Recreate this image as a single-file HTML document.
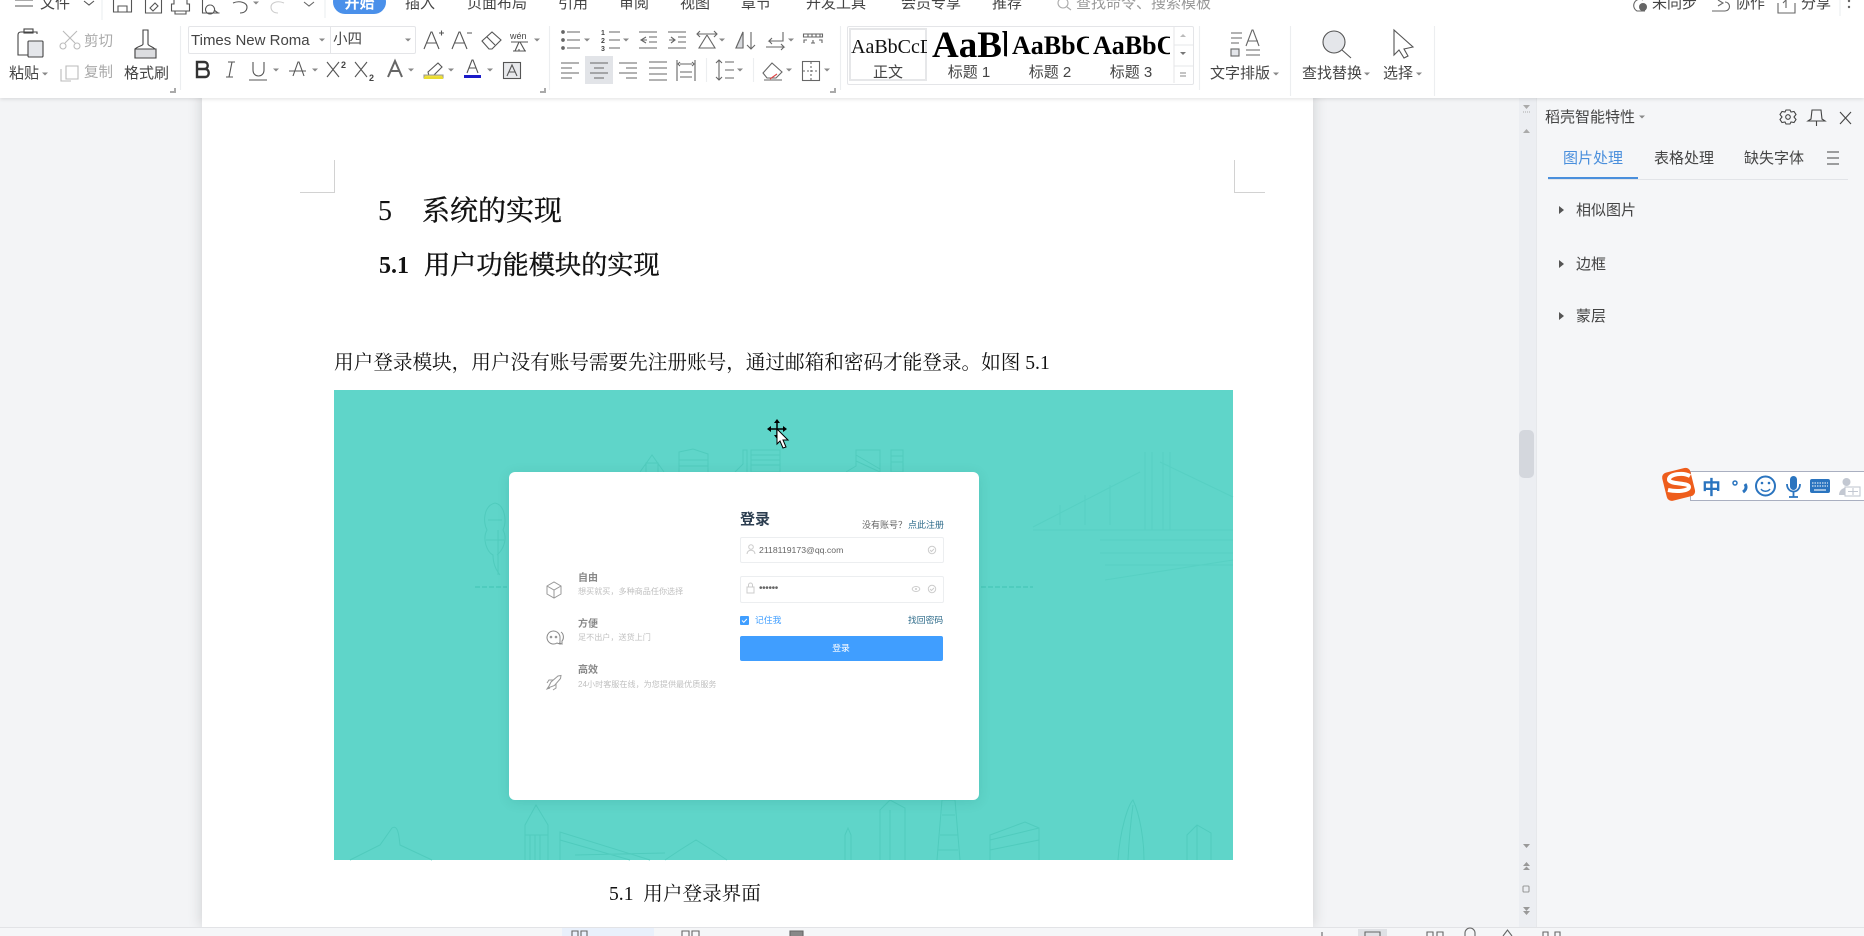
<!DOCTYPE html>
<html lang="zh"><head><meta charset="utf-8"><title>WPS</title>
<style>
html,body{margin:0;padding:0;width:1864px;height:936px;overflow:hidden;background:#f3f4f6}
body{position:relative;font-family:"Liberation Sans","Noto Sans CJK SC",sans-serif;color:#333}
.b{position:absolute}
.t{position:absolute;white-space:nowrap;line-height:1;font-size:15px;color:#444}
.s{font-family:"Liberation Serif","Noto Serif CJK SC",serif;color:#111}
.c{transform:translateX(-50%)}
.l{filter:blur(.25px)}
svg{position:absolute;left:0;top:0;overflow:visible}
</style></head><body>

<!-- document -->
<div class="b" style="left:202px;top:90px;width:1111px;height:837px;background:#fff;box-shadow:0 0 14px rgba(0,0,0,.16)"></div>
<div class="b" style="left:334px;top:390px;width:899px;height:470px;background:#5fd5c9"></div>

<svg width="1864" height="936" fill="none" stroke="#50cbbd" stroke-width="1">
<path d="M640 472l12-17 12 17M646 472v-9h12v9M679 472v-20l14-3 15 5v18M679 460h29M679 466h29M735 472l8-8v-14h4v22M751 450h29v22h-29zM751 455h29M751 460h29M751 465h29M846 472l10-6v-16h24v22M856 455l24 14M856 461l24 11M891 450h12v22h-12zM891 456h12M891 462h12"/>
<g stroke="#57d0c3"><path d="M1033 527l107-55M1160 462l73 35M1145 452v78M1170 452v78M1152 452v78M1163 452v78M1033 530h200M1100 540h133M1100 553h133M1105 565h128M1105 580l128-20M1060 525v-20M1085 525v-30M1110 525v-40"/></g>
<path d="M495 503c-12 3-12 20-8 27-5 9 0 22 6 25 0 8 3 15 7 20M495 503c10 2 12 18 8 27 5 9 0 20-6 25M498 530v45M488 520h14M486 540h18"/>
<path d="M475 587h32M981 587h52" stroke="#3fc3b3" stroke-dasharray="5 2"/>
<path d="M350 860l30-15 12-17c6-4 7 8 8 17l32 15M525 860v-35l11-20 12 20v35M525 835h23M530 835v25M535 835v25M540 835v25M560 860v-28l90 28M560 840l70 20M575 855l90-2M665 860l15-10 16-10 16 10 15 10M845 860v-25l3-7 3 7v25M880 860v-50l10-10 15 8v52M890 810v50M937 860l5-60h13l5 60M942 815h13M940 835h18M938 850h20M990 860v-25l35-13 14 6v32M990 840l49-12M990 850l49-10M1118 860c2-30 10-55 15-60 7 15 11 40 11 60M1128 860c1-22 3-40 5-55M1187 860v-25l10-10 14 8v27M1197 825v35"/>
</svg>

<div class="b" style="left:509px;top:472px;width:470px;height:328px;background:#fff;border-radius:6px;box-shadow:0 2px 12px rgba(0,80,70,.12)"></div>
<div class="t l" style="left:740px;top:512px;font-size:15px;font-weight:700;color:#2c3e50">登录</div>
<div class="t l" style="left:862px;top:520.500px;font-size:9px;color:#666">没有账号？</div>
<div class="t l" style="left:908px;top:520.500px;font-size:9px;color:#2d6b8a">点此注册</div>
<div class="b" style="left:740px;top:537px;width:202px;height:24px;border:1px solid #eceef0;border-radius:2px"></div>
<div class="t l" style="left:759px;top:545.500px;font-size:8.700px;color:#666">2118119173@qq.com</div>
<div class="b" style="left:740px;top:576px;width:202px;height:25px;border:1px solid #eceef0;border-radius:2px"></div>
<div class="t l" style="left:759px;top:584px;font-size:10px;color:#666;letter-spacing:-.35px">••••••</div>
<div class="b" style="left:740px;top:616px;width:9px;height:9px;background:#409eff;border-radius:1px"></div>
<div class="t l" style="left:755px;top:616px;font-size:8.800px;color:#409eff">记住我</div>
<div class="t l" style="left:908px;top:616px;font-size:8.800px;color:#2d6b8a">找回密码</div>
<div class="b" style="left:740px;top:636px;width:203px;height:25px;background:#409eff;border-radius:2px"></div>
<div class="t c l" style="left:841px;top:644px;font-size:8.800px;color:#fff">登录</div>
<div class="t l" style="left:578px;top:574px;font-size:10px;color:#888;font-weight:700">自由</div>
<div class="t l" style="left:578px;top:588px;font-size:8.100px;color:#c0c0c0">想买就买，多种商品任你选择</div>
<div class="t l" style="left:578px;top:620px;font-size:10px;color:#888;font-weight:700">方便</div>
<div class="t l" style="left:578px;top:634px;font-size:8.100px;color:#c0c0c0">足不出户，送货上门</div>
<div class="t l" style="left:578px;top:666px;font-size:10px;color:#888;font-weight:700">高效</div>
<div class="t l" style="left:578px;top:681px;font-size:8.100px;color:#c0c0c0">24小时客服在线，为您提供最优质服务</div>

<svg width="1864" height="936" fill="none" stroke="#999" stroke-width="1">
<path d="M547 586l7-4 7 4v8l-7 4-7-4zM547 586l7 4 7-4M554 590v8"/>
<path d="M560 637a6.500 6.500 0 1 0-3 6l3 1zM561 632c3 2 3 7 1 9v3l-3-1" stroke="#888"/><circle cx="551" cy="637" r=".8" fill="#888"/><circle cx="556" cy="637" r=".8" fill="#888"/>
<path d="M548 688l3-6 7-6 3-.5-.5 3-6 7zM553 680h-4l-2 3M556 684v4l-3 2M549 686l-2 3 3-1"/>
<circle cx="751" cy="547" r="2.300" stroke="#ccc"/><path d="M747 554c0-5 8-5 8 0" stroke="#ccc"/>
<circle cx="932" cy="550" r="3.700" stroke="#ccc"/><path d="M930 550l1.500 1.500 2.500-2.500" stroke="#ccc"/>
<rect x="747" y="587" width="7" height="6" stroke="#ccc"/><path d="M748.500 587v-2a2 2 0 0 1 4 0v2" stroke="#ccc"/>
<ellipse cx="916" cy="589" rx="3.800" ry="2.500" stroke="#ccc"/><circle cx="916" cy="589" r="1" fill="#ccc" stroke="none"/>
<circle cx="932" cy="589" r="3.700" stroke="#ccc"/><path d="M930 589l1.500 1.500 2.500-2.500" stroke="#ccc"/>
<path d="M742 620.500l1.800 1.800 3-3.300" stroke="#fff"/>
<!-- crop marks -->
<path d="M300 192.500h34.500V160M1265 192.500h-30.500V160" stroke="#d2d2d2"/>
<!-- mouse cursor -->
<path d="M777 422v14M770 429h14" stroke="#000" stroke-width="1.500"/><path d="M777 419l-3 4h6zM777 439l-3-4h6zM767 429l4-3v6zM787 429l-4-3v6z" fill="#000" stroke="none"/>
<path d="M777 429l0 15 3-3 3 7 3-1-3-7h5z" fill="#fff" stroke="#000"/>
</svg>

<div class="t s" style="left:378px;top:198px;font-size:28px">5</div>
<div class="t s" style="left:422px;top:198px;font-size:28px;-webkit-text-stroke:.4px #111">系统的实现</div>
<div class="t s" style="left:379px;top:254px;font-size:24px;font-weight:700">5.1</div>
<div class="t s" style="left:424px;top:253px;font-size:26.200px;-webkit-text-stroke:.4px #111">用户功能模块的实现</div>
<div class="t s" style="left:334px;top:354px;font-size:19.630px">用户登录模块，用户没有账号需要先注册账号，通过邮箱和密码才能登录。如图 5.1</div>
<div class="t s" style="left:609px;top:885px;font-size:19.600px">5.1&nbsp; 用户登录界面</div>

<!-- scrollbar + panel -->
<div class="b" style="left:1519px;top:98px;width:17px;height:829px;background:#eceef2"></div>
<div class="b" style="left:1519px;top:430px;width:15px;height:48px;background:#d4d7dd;border-radius:5px"></div>
<div class="b" style="left:1536px;top:98px;width:328px;height:829px;background:#f5f6f8;border-left:1px solid #e6e8eb;box-sizing:border-box"></div>
<div class="t" style="left:1545px;top:110px">稻壳智能特性</div>
<div class="t" style="left:1563px;top:151px;color:#4a8fdc">图片处理</div>
<div class="t" style="left:1654px;top:151px">表格处理</div>
<div class="t" style="left:1744px;top:151px">缺失字体</div>
<div class="b" style="left:1548px;top:179px;width:300px;height:1px;background:#e2e4e8"></div>
<div class="b" style="left:1548px;top:177px;width:90px;height:2px;background:#4a8fdc"></div>
<div class="t" style="left:1576px;top:203px">相似图片</div>
<div class="t" style="left:1576px;top:257px">边框</div>
<div class="t" style="left:1576px;top:309px">蒙层</div>

<!-- status bar -->
<div class="b" style="left:0;top:927px;width:1864px;height:9px;background:#f5f6f8;border-top:1px solid #e2e3e6;box-sizing:border-box"></div>
<div class="b" style="left:562px;top:928px;width:92px;height:8px;background:#e9f0fb"></div>
<div class="b" style="left:1358px;top:929px;width:29px;height:7px;background:#dfe1e5"></div>

<!-- ribbon -->
<div class="b" style="left:0;top:0;width:1864px;height:98px;background:#fff;box-shadow:0 1px 4px rgba(0,0,0,.12)"></div>
<div class="b" style="left:333px;top:-10px;width:53px;height:24px;background:#4a90ea;border-radius:12px"></div>

<div class="t" style="left:40px;top:-4px">文件</div>
<div class="t c" style="left:359.500px;top:-4px;color:#fff;font-weight:700">开始</div>
<div class="t c" style="left:420px;top:-4px">插入</div>
<div class="t c" style="left:497px;top:-4px">页面布局</div>
<div class="t c" style="left:573px;top:-4px">引用</div>
<div class="t c" style="left:634px;top:-4px">审阅</div>
<div class="t c" style="left:695px;top:-4px">视图</div>
<div class="t c" style="left:756px;top:-4px">章节</div>
<div class="t c" style="left:836px;top:-4px">开发工具</div>
<div class="t c" style="left:931px;top:-4px">会员专享</div>
<div class="t c" style="left:1007px;top:-4px">推荐</div>
<div class="t" style="left:1076px;top:-4px;color:#999">查找命令、搜索模板</div>
<div class="t" style="left:1652px;top:-4px">未同步</div>
<div class="t" style="left:1735px;top:-4px">协作</div>
<div class="t" style="left:1801px;top:-4px">分享</div>

<div class="t" style="left:9px;top:66px">粘贴</div>
<div class="t" style="left:84px;top:35px;color:#aaa;font-size:14.500px">剪切</div>
<div class="t" style="left:84px;top:66px;color:#aaa;font-size:14.500px">复制</div>
<div class="t" style="left:124px;top:66px">格式刷</div>

<div class="b" style="left:188px;top:26px;width:226px;height:26px;border:1px solid #e4e5e8;border-radius:2px"></div>
<div class="b" style="left:330px;top:26px;width:1px;height:28px;background:#e4e5e8"></div>
<div class="t" style="left:191px;top:33px;font-size:15px">Times New Roma</div>
<div class="t" style="left:333px;top:33px;font-size:14.500px">小四</div>

<div class="b" style="left:585px;top:56px;width:28px;height:28px;background:#e2e4e8"></div>

<div class="b" style="left:847px;top:26px;width:345px;height:57px;border:1px solid #e4e5e8;border-radius:2px;overflow:hidden"></div>
<div class="b" style="left:849px;top:28px;width:78px;height:53px;border:2px solid #e6e7e9;box-sizing:border-box"></div>
<div class="b s" style="left:851px;top:35px;width:76px;height:24px;overflow:hidden;font-size:20px;line-height:24px;white-space:nowrap">AaBbCcD</div>
<div class="b s" style="left:932px;top:27px;width:75px;height:38px;overflow:hidden;font-size:37px;line-height:38px;font-weight:700;white-space:nowrap;color:#000">AaBbC</div>
<div class="b s" style="left:1012px;top:31px;width:77px;height:30px;overflow:hidden;font-size:26px;line-height:30px;font-weight:700;white-space:nowrap;color:#000">AaBbCc</div>
<div class="b s" style="left:1093px;top:31px;width:77px;height:30px;overflow:hidden;font-size:26px;line-height:30px;font-weight:700;white-space:nowrap;color:#000">AaBbCc</div>
<div class="t c" style="left:888px;top:65px">正文</div>
<div class="t c" style="left:969px;top:65px">标题 1</div>
<div class="t c" style="left:1050px;top:65px">标题 2</div>
<div class="t c" style="left:1131px;top:65px">标题 3</div>
<div class="t" style="left:1210px;top:66px">文字排版</div>
<div class="t" style="left:1302px;top:66px">查找替换</div>
<div class="t" style="left:1383px;top:66px">选择</div>

<svg width="1864" height="936" fill="none" stroke="#555" stroke-width="1.100">
<defs><path id="a" d="M-3-1.500h6l-3 3z" fill="#888" stroke="none"/></defs>
<!-- separators -->
<path stroke="#eceef0" d="M102 0v20M325 0v18M180.500 26v64M549.500 26v64M840.500 26v64M1199.500 26v64M1290.500 26v70M1434.500 26v70M706.500 58v24M753.500 58v24M1840 0v16"/>
<path stroke="#aaa" stroke-width="2" d="M175 88v4h-5M545 88v4h-5M835 88v4h-5"/>
<!-- top toolbar -->
<path d="M15 0h18M15 6h18M84 1l5 4 5-4"/>
<path d="M113.500 0v12h18V0M118 12V6h9v6"/>
<path d="M145.500 0v13h16V0M150 8l5-5 3 3-5 5z"/>
<path d="M174 0v4h-2.500v7h18V4H187V0M175 11v3h11v-3"/>
<path d="M202.500 0v13h17M210 5a4.500 4.500 0 1 0 .1 0M214 10l4 3"/>
<path d="M233 3c7-3 14 0 14 4s-3 6-7 6"/><use href="#a" x="256" y="3"/>
<path stroke="#ccc" d="M284 3c-7-3-13 0-13 4s3 6 7 6"/>
<path d="M304 2l5 4 5-4" stroke="#666"/>
<circle cx="1063" cy="3" r="5" stroke="#aaa"/><path stroke="#aaa" d="M1067 7l4 3"/>
<path d="M1643 0a6 6 0 1 0-6 11h8" stroke="#666"/><circle cx="1643" cy="7" r="4" fill="#666" stroke="none"/>
<path d="M1712 11h13a4 4 0 0 0 0-9M1718 0l5 3-5 3" stroke="#666"/>
<path d="M1778 3v10h17V3M1786 8V0l-3 3" stroke="#666"/>
<circle cx="1849" cy="1" r="1.200" fill="#666" stroke="none"/><circle cx="1849" cy="7" r="1.200" fill="#666" stroke="none"/>
<!-- paste -->
<path d="M37 34V32H21c-2 0-3 1-3 3v20h10" stroke="#444"/><rect x="24" y="29" width="9" height="4" stroke="#444"/><rect x="28" y="41" width="15" height="16" rx="1" fill="#e4e6ea" stroke="#444"/><use href="#a" x="45" y="74"/>
<!-- cut -->
<g stroke="#bbb"><path d="M63 31l12 12M77 31L65 43"/><circle cx="63" cy="46" r="3"/><circle cx="77" cy="46" r="3"/><path d="M66 66h12v13H66zM61 69v12h10"/></g>
<!-- brush -->
<path d="M143 30h5v14c0 2 4 2 7 5v9h-20v-9c3-3 8-3 8-5z" stroke="#444"/><path d="M135 49h21v9h-21z" fill="#dcdde0" stroke="#444"/>
<use href="#a" x="322" y="40"/><use href="#a" x="408" y="40"/>
<!-- A+ A- eraser wen -->
<path d="M424 49l7-17h1l7 17M427 43h10M439 33h5M441.500 30.500v5"/>
<path d="M452 49l7-17h1l7 17M455 43h10M467 33h5"/>
<path d="M482 41l10-9 9 8-9 9h-3zM487 37l8 8" />
<path d="M511 42h17M519 42l-4 9h10l-5-9M513 51h13M519 51v-2"/>
<text x="510" y="39" font-size="9" fill="#444" stroke="none" font-family="Liberation Sans">wén</text>
<use href="#a" x="537" y="40"/>
<!-- B I U ... -->
<path d="M197 62h7c5 0 5 7 0 7h-7zM197 69h8c5 0 5 8 0 8h-8z" stroke="#333" stroke-width="2.400"/>
<path d="M228 62h7M226 77h7M232 62l-3 15"/>
<path d="M253 62v8c0 8 11 8 11 0v-8M249 80h18"/><use href="#a" x="276" y="70"/>
<path d="M293 76l5-14h1l5 14M289 71h17"/><use href="#a" x="315" y="70"/>
<path d="M327 62l12 15M339 62l-12 15"/><text x="341" y="68" font-size="9" fill="#444" stroke="none" font-family="Liberation Sans" font-weight="700">2</text>
<path d="M355 62l12 15M367 62l-12 15"/><text x="369" y="81" font-size="9" fill="#444" stroke="none" font-family="Liberation Sans" font-weight="700">2</text>
<path d="M388 77l7-16 7 16M391 71h8" stroke-width="2" stroke="#666"/><use href="#a" x="411" y="70"/>
<path d="M428 72l10-9 4 4-9 9h-4z"/><path d="M424 75h19v3h-19z" fill="#f0e040" stroke="#999"/><path d="M424 78h19" stroke="#e8dc30" stroke-width="2"/><use href="#a" x="451" y="70"/>
<path d="M467 73l5-13h1l5 13M469 68h7"/><path d="M464 76.500h17" stroke="#1a1ac8" stroke-width="3"/><use href="#a" x="490" y="70"/>
<rect x="503.500" y="62.500" width="17" height="16" fill="#e8e9ec"/><path d="M507 76l5-11 5 11M509 72h6"/>
<!-- lists -->
<g stroke="#666">
<path d="M567 32h13M567 40h13M567 48h13"/><g fill="#666"><circle cx="563" cy="32" r="1.300"/><circle cx="563" cy="40" r="1.300"/><circle cx="563" cy="48" r="1.300"/></g>
<path d="M609 32h11M609 40h11M609 48h11"/>
<text x="601" y="35" font-size="7" font-weight="700" fill="#444" stroke="none" font-family="Liberation Sans">1</text><text x="601" y="43" font-size="7" font-weight="700" fill="#444" stroke="none" font-family="Liberation Sans">2</text><text x="601" y="51" font-size="7" font-weight="700" fill="#444" stroke="none" font-family="Liberation Sans">3</text>
<path d="M639 32h18M649 37h8M649 42h8M639 48h18M646 37l-5 3 5 3M641 40h6"/>
<path d="M668 32h18M678 37h8M678 42h8M668 48h18M669 40h5M671 37l4 3-4 3"/>
<path d="M697 34h20M700 31l-3 3 3 3M714 31l3 3-3 3M707 35l-8 13h16l-8-13"/>
<path d="M736 48l7-16v16zM751 32v17M747 45l4 4 4-4"/><path d="M736 48l7-16v16z" fill="#d8dade" stroke="#666"/>
<path d="M783 32v9h-14l3-3M769 41l3 3M766 47h18l-3-3M784 47l-3 3"/>
<path d="M803.500 34h19v3h-19zM808 34v3M812 34v3M816 34v3M820 34v3M804 43v-3h3M811 43h4M813 40v3M819 40h3v3"/>
<path d="M561 63h18M561 68h11M561 73h18M561 78h11"/>
<path d="M590 63h18M594 68h10M590 73h18M594 78h10"/>
<path d="M619 63h18M626 68h11M619 73h18M626 78h11"/>
<path d="M649 62h18M649 68h18M649 74h18M649 80h18"/>
<path d="M677 60v21M695 60v21M680 64h12M680 62l-2 2 2 2M692 62l2 2-2 2M680 72h12M680 77h12"/>
<path d="M719 60v20M716 63l3-3 3 3M716 77l3 3 3-3M725 62h9M725 70h9M725 78h9"/>
<path d="M763 73l9-10 10 9-6 6h-9zM764 80h18"/><path d="M770 79l7-5" stroke="#d44"/>
<rect x="802.500" y="61.500" width="17" height="19"/><path d="M811 62v19M803 71h17" stroke-dasharray="2 2"/>
</g>
<use href="#a" x="587" y="40"/><use href="#a" x="626" y="40"/><use href="#a" x="722" y="40"/><use href="#a" x="791" y="40"/>
<use href="#a" x="740" y="70"/><use href="#a" x="789" y="70"/><use href="#a" x="827" y="70"/>
<!-- style scroll -->
<path stroke="#e6e7e9" d="M1174 27v56M1174 45h19M1174 66h19"/>
<path d="M1180 37l3-3 3 3z" fill="#bbb" stroke="none"/><path d="M1180 52l3 3 3-3z" fill="#777" stroke="none"/><path stroke="#888" d="M1180 73h6M1180 76h6"/>
<!-- text layout -->
<path stroke="#666" d="M1231 33h11M1231 38h11M1231 43h8M1246 46l6-16h1l6 16M1248 41h10M1246 50h14M1246 55h14"/><rect x="1231" y="49" width="8" height="7" stroke="#666" fill="#e4e6ea"/>
<use href="#a" x="1276" y="74"/>
<!-- search -->
<circle cx="1334" cy="42" r="11" fill="#e4e6ea" stroke="#555"/><path d="M1342 50l9 8"/><use href="#a" x="1367" y="74"/>
<!-- select -->
<path d="M1394 30v25l5-5 5 8 4-2-4-7 9-2z" stroke="#555"/><use href="#a" x="1419" y="74"/>
<!-- scrollbar marks -->
<path d="M1523 105h7l-3.500 4z" fill="#aaa" stroke="none"/><path d="M1523 112h7" stroke="#aaa" stroke-dasharray="1 1"/>
<path d="M1523 133l3.500-4 3.500 4z" fill="#aaa" stroke="none"/>
<path d="M1523 844h7l-3.500 4z" fill="#999" stroke="none"/>
<path d="M1523 866l3.500-4 3.500 4zM1523 870l3.500-3.500 3.500 3.500z" fill="#999" stroke="none"/>
<rect x="1523" y="886" width="6" height="6" rx="1" stroke="#999"/>
<path d="M1523 907h7l-3.500 4zM1523 911h7l-3.500 4z" fill="#999" stroke="none"/>
<!-- panel -->
<use href="#a" x="1642" y="117"/>
<path d="M1786 110h4l1 2 3-.5 2 3-2 2.500 2 2.500-2 3-3-.5-1 2h-4l-1-2-3 .5-2-3 2-2.500-2-2.500 2-3 3 .5z" stroke="#444"/><circle cx="1788" cy="117" r="2.300" stroke="#444"/>
<path d="M1812 110h9l1 9 3 2h-17l3-2zM1816.500 121v5" stroke="#444"/>
<path d="M1840 112l11 12M1851 112l-11 12" stroke="#444"/>
<path d="M1827 152h12M1827 158h12M1827 164h12" stroke="#444"/>
<path d="M1559 206l5 4-5 4zM1559 260l5 4-5 4zM1559 312l5 4-5 4z" fill="#555" stroke="none"/>
<!-- status icons -->
<g stroke="#666"><path d="M572 936v-5h6v5M581 936v-5h6v5M682 936v-5h7v5M692 936v-5h7v5"/><path d="M790 936v-5h13v5" fill="#888"/><path d="M1322 936v-4M1365 936v-4h15v4M1427 936v-4h6v4M1437 936v-4h6v4M1465 936v-3a3 3 0 0 1 10 0v3M1503 936l4.500-6 4.500 6M1543 936v-4h5v4M1555 936v-4h5v4"/></g>

<!-- sogou -->
<rect x="1690.500" y="471.500" width="180" height="29" fill="#fff" stroke="#a9afc0" stroke-width="1"/>
<rect x="1664" y="470" width="29" height="29" rx="5" fill="#ee5d1c" stroke="none" transform="rotate(-14 1678 484)"/>
<path d="M1690 476c-7-4-20-2-21 3-1 6 20 3 20 8 0 4-12 5-21 3" stroke="#fff" stroke-width="4"/>
<text x="1702" y="494" font-size="19" font-weight="700" fill="#2a74bf" stroke="none" font-family="Noto Sans CJK SC,sans-serif">中</text>
<g stroke="#2a74bf"><circle cx="1735" cy="483" r="2" stroke-width="1.500"/><path d="M1745 484c2 3 1 6-2 8" stroke-width="3"/>
<circle cx="1765.500" cy="486" r="9.500" stroke-width="2"/><path d="M1761 489c2 3 7 3 9 0" stroke-width="1.500"/></g>
<circle cx="1762" cy="483" r="1.300" fill="#2a74bf" stroke="none"/><circle cx="1769" cy="483" r="1.300" fill="#2a74bf" stroke="none"/>
<rect x="1790" y="476" width="7" height="14" rx="3.500" fill="#2a74bf" stroke="none"/><path d="M1787 484c0 10 13 10 13 0M1793.500 492v5M1789 497h9" stroke="#2a74bf" stroke-width="1.800"/>
<rect x="1810" y="479" width="20" height="14" rx="2" fill="#2a74bf" stroke="none"/><path d="M1812 483h16M1812 486h16" stroke="#fff" stroke-dasharray="1.500 1"/><path d="M1814 490h12" stroke="#fff"/>
<circle cx="1846.500" cy="482" r="4" fill="#c3c8d2" stroke="none"/><path d="M1839 495c0-8 10-9 13-6v6z" fill="#c3c8d2" stroke="none"/><rect x="1845" y="487" width="15" height="9" fill="#fff" stroke="#c3c8d2"/><path d="M1848 491.500h10M1853 488v7" stroke="#c3c8d2"/>
</svg>
</body></html>
